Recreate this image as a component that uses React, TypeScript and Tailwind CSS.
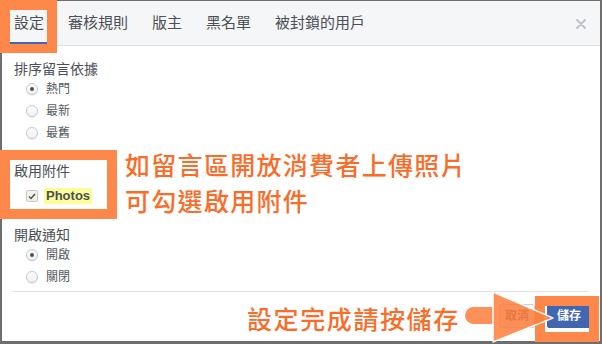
import React from 'react';

const font = { fontFamily: '"Liberation Sans", "Noto Sans CJK TC", sans-serif' };
const cjk = { fontFamily: '"Noto Sans CJK TC", "Liberation Sans", sans-serif' };

const tabs = ['設定', '審核規則', '版主', '黑名單', '被封鎖的用戶'];

const Radio = ({ label, checked }: { label: string; checked?: boolean }) => (
  <div className="flex h-[22px] items-center pl-[24px]">
    <span className="flex h-[12px] w-[12px] items-center justify-center rounded-full border border-[#c4c7cc] bg-gradient-to-b from-white to-[#eef0f2] shadow-[0_1px_1px_rgba(0,0,0,0.08)]">
      {checked && <span className="h-[4px] w-[4px] rounded-full bg-[#4b4f56]" />}
    </span>
    <span className="ml-[8px] text-[12px] leading-none text-[#555a61]">{label}</span>
  </div>
);

const Heading = ({ children, className = '' }: { children: React.ReactNode; className?: string }) => (
  <div className={`h-[18px] pl-[12px] text-[14px] leading-[18px] text-[#4b4f56] ${className}`}>{children}</div>
);

export default function App() {
  return (
    <div className="relative h-[344px] w-[602px] overflow-hidden bg-white" style={font}>
      {/* dialog */}
      <div className="flex h-full flex-col border-2 border-b-[3px] border-t border-[#6e6e6e] bg-white">
        <div className="flex h-[45px] shrink-0 items-stretch border-b border-[#dddfe2] bg-[#f5f6f7] pl-[8px] pr-[14px]">
          <div className="flex gap-[16px]">
            {tabs.map((t, i) => (
              <div
                key={t}
                className={`flex items-center border-b-[3px] px-[4px] pt-[4px] text-[15px] text-[#4b4f56] ${
                  i === 0 ? 'border-[#4267b2] text-[#1d2129]' : 'border-transparent'
                }`}
              >
                {t}
              </div>
            ))}
          </div>
          <div className="ml-auto flex items-center pt-[2px]">
            <svg width="10" height="10" viewBox="0 0 10 10">
              <path d="M1 1L9 9M9 1L1 9" stroke="#bec2c9" strokeWidth="2" strokeLinecap="round" />
            </svg>
          </div>
        </div>

        <Heading className="mt-[14px]">排序留言依據</Heading>
        <Radio label="熱門" checked />
        <Radio label="最新" />
        <Radio label="最舊" />

        <Heading className="mt-[18px]">啟用附件</Heading>
        <div className="mt-[5px] flex h-[22px] items-center pl-[24px]">
          <span className="flex h-[12px] w-[12px] items-center justify-center rounded-[2px] border border-[#c4c7cc] bg-[#f4f4e4]">
            <svg width="8" height="7" viewBox="0 0 8 7">
              <path d="M1 3.5L3 5.5L7 1" stroke="#4b4f56" strokeWidth="1.5" fill="none" />
            </svg>
          </span>
          <span className="ml-[6px] bg-[#fbfd9a] px-[2px] text-[13px] font-bold leading-[16px] text-[#4b4f56]">Photos</span>
        </div>

        <Heading className="mt-[19px]">開啟通知</Heading>
        <Radio label="開啟" checked />
        <Radio label="關閉" />

        <div className="mx-[11px] mt-[3px] border-t border-[#dddfe2]" />

        <div className="mr-[9px] mt-[12px] flex justify-end gap-[12px]">
          <button className="h-[24px] w-[36px] rounded-[2px] border border-[#ccd0d5] bg-[#f6f7f9] text-[12px] font-bold text-[#4b4f56]">
            取消
          </button>
          <button className="h-[24px] w-[44px] rounded-[2px] border border-[#4267b2] bg-[#4267b2] text-[12px] font-bold text-white">
            儲存
          </button>
        </div>
      </div>

      {/* annotations */}
      <div className="absolute left-0 top-0 h-[53px] w-[57px] border-[10px] border-b-[9px] border-[#fe884a]" />
      <div className="absolute left-0 top-[150px] h-[69px] w-[117px] border-[10px] border-[#fe884a]" />
      <div
        className="absolute left-[125px] top-[146px] text-[25px] font-medium leading-[36px] tracking-[1.3px] text-[#f96d2b]"
        style={cjk}
      >
        <div>如留言區開放消費者上傳照片</div>
        <div>可勾選啟用附件</div>
      </div>

      <div className="absolute left-[535px] top-[296px] h-[46px] w-[64px] border-[10px] border-[#fe884a]" />
      <svg className="absolute left-[460px] top-[286px]" width="100" height="60" viewBox="460 286 100 60">
        <g opacity="0.86">
          <rect x="465" y="307" width="40" height="17" rx="8.5" fill="#fe7f3e" />
          <path
            d="M493 292 L553 318 L493 342 Z"
            fill="#fe7f3e"
            stroke="white"
            strokeWidth="1.5"
            strokeLinejoin="round"
          />
        </g>
      </svg>
      <div
        className="absolute left-[247px] top-[300px] text-[25px] font-medium leading-[36px] tracking-[1.6px] text-[#f96d2b]"
        style={cjk}
      >
        設定完成請按儲存
      </div>
    </div>
  );
}
